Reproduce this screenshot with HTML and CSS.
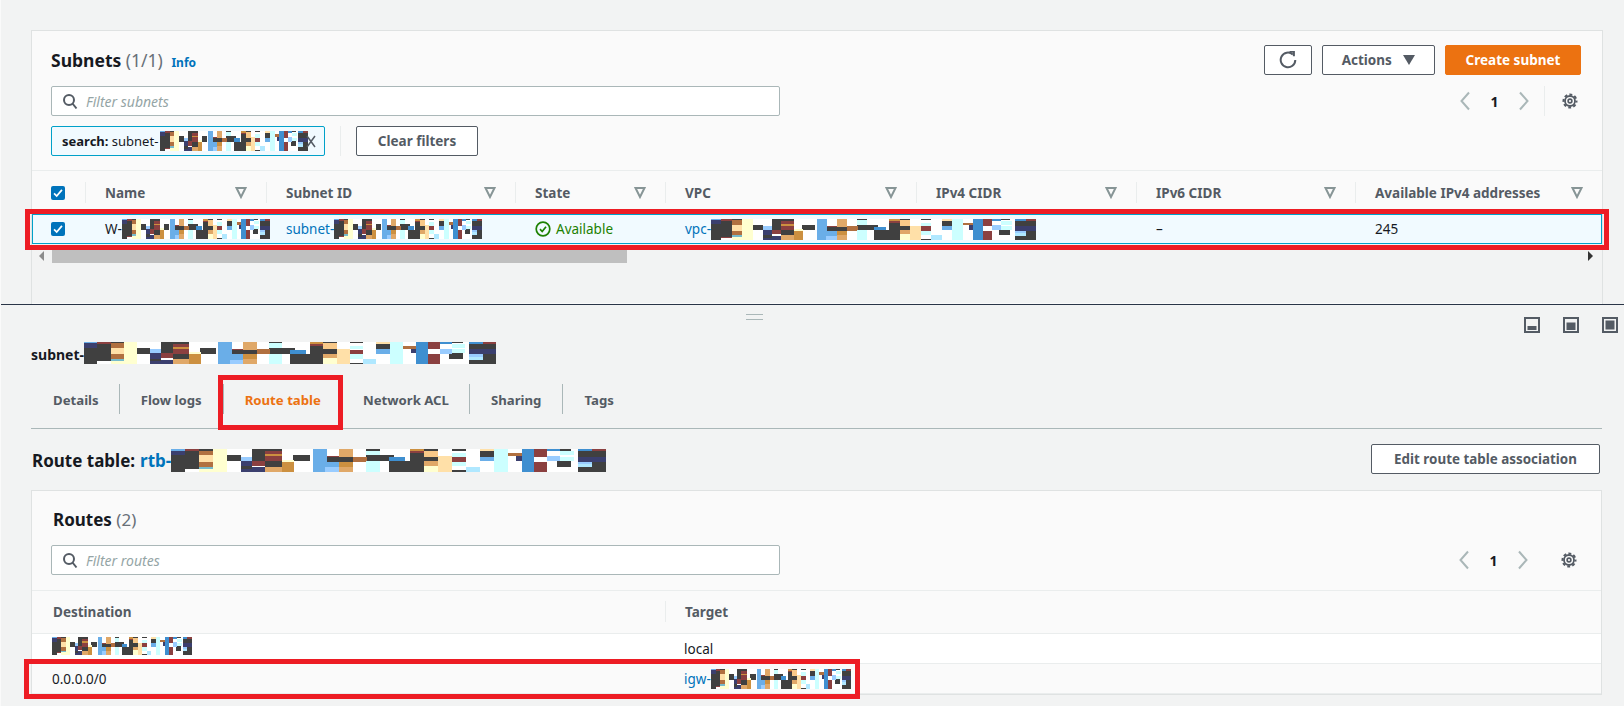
FILE: index.html
```html
<!DOCTYPE html>
<html lang="en">
<head>
    <meta charset="UTF-8">
    <title>Subnets</title>
    <link rel="stylesheet" href="styles.css">
</head>
<body>

<svg class="defs" width="0" height="0">
    <defs>
        <!-- the blurred-out id, 31 blocks wide and 6 high -->
        <g id="mosaic">
            <path fill="#404040" d="M0 1.5h1v4.5h-1zM1 .5h1v4.6h-1zM2 0h1v.4h-1zM4 1.6h1v1.6h-1zM5 4.5h.8v.8h-.8zM5.8 0h.9v3h-.9zM6.7 0h1.2v.5h-1.2zM6.7 3.2h1.2v1.5h-1.2zM8.7 1.6h1.2v1.6h-1.2zM11 2.2h2v1.2h-2zM13.9 0h1v.4h-1zM13.9 1.6h2v1.6h-2zM15.5 3.2h2.5v2.8h-2.5zM17 1h1v2.2h-1zM18 0h1v.4h-1zM18 2h1v1.2h-1zM20 0h1v.4h-1zM20 5.6h1v.4h-1zM22 .5h1v1.5h-1zM27.5 0h1v.4h-1zM27.5 3h1v1.6h-1zM29 .6h2v1.4h-2zM29 4.8h2v1.2h-2zM30 3.4h1v2h-1z"/>
            <path fill="#8b4040" d="M1 0h1v.5h-1zM1 5.1h1v.2h-1zM5.8 3h.9v1.4h-.9zM6.7 .5h1.2v.9h-1.2zM6.7 1.9h1.2v1.3h-1.2zM20 2.1h1v1.2h-1zM25.8 0h1v2h-1zM25.8 3.4h1v2.6h-1zM17 .5h1v.5h-1zM30 0h1v.6h-1zM11 1.9h1v.3h-1z"/>
            <path fill="#3b3f6e" d="M0 .4h1v1.1h-1zM5 3h.8v1.5h-.8zM5 5.3h.8v.7h-.8zM5.8 4.8h.9v1.2h-.9zM24.6 1.6h1v1.4h-1zM29 2h2v1.4h-2z"/>
            <path fill="#6aaee8" d="M0 0h1v.4h-1zM10.1 0h1v6h-1zM11 3.4h1v1.4h-1zM22 2h1v1.2h-1z"/>
            <path fill="#3f8fd0" d="M15.5 2.2h1.2v1h-1.2zM25 0h.9v6h-.9zM26.8 0h.9v.5h-.9zM29 0h1v.6h-1z"/>
            <path fill="#99ccff" d="M5 2h.8v1h-.8zM11 4.8h1v1.2h-1zM26.8 1.8h.9v1.4h-.9zM29 3.4h1v1.4h-1z"/>
            <path fill="#b07040" d="M2 .4h1v1.2h-1zM2 3.3h1v1.3h-1zM13 2h1v1.4h-1zM24 1h1v.8h-1z"/>
            <path fill="#cc9040" d="M7.9 3.4h.9v2.6h-.9zM12 3.4h1v1.2h-1zM6.7 1.4h1.2v.5h-1.2zM17 0h1v.5h-1z"/>
            <path fill="#e0a868" d="M6.7 4.7h1.2v1.3h-1.2zM12 0h1v2.2h-1zM12 4.6h1v1.4h-1zM18 3.2h1v1.2h-1z"/>
            <path fill="#f8c888" d="M18 .4h1v1.6h-1z"/>
            <path fill="#ffe0a8" d="M2 1.6h1v1.7h-1zM19 1.9h1v4.1h-1zM22 0h1v.5h-1z"/>
            <path fill="#ffffd0" d="M3 0h1v6h-1zM2 5.1h1v.9h-1zM7.9 2.8h.9v.6h-.9zM18 4.4h1v1.6h-1z"/>
            <path fill="#77bbcc" d="M2 4.6h1v.5h-1z"/>
            <path fill="#ccffff" d="M13.9 .4h1v1.2h-1zM13.9 3.2h1v2.8h-1zM20 1h1v1h-1zM20 3.3h1v1.2h-1zM23 0h1v6h-1zM27.7 .6h1v1h-1zM27.7 2h1v1h-1z"/>
            <path fill="#b0e8ff" d="M21 4.6h1v1.4h-1zM29 4h1v.8h-1z"/>
        </g>
        <g id="caret"><path d="M1.5 2h9L6 11z" fill="none" stroke="#879596" stroke-width="2"/></g>
        <g id="search"><circle cx="7" cy="7" r="5" fill="none" stroke="#545b64" stroke-width="2"/><path d="M10.5 10.5l4 5" stroke="#545b64" stroke-width="2" fill="none"/></g>
        <g id="gear">
            <circle cx="8" cy="8" r="1.9" fill="none" stroke="#545b64" stroke-width="1.600"/>
            <circle cx="8" cy="8" r="5" fill="none" stroke="#545b64" stroke-width="1.800"/>
            <circle cx="8" cy="8" r="6.500" fill="none" stroke="#545b64" stroke-width="2" stroke-dasharray="2.900 2.205" stroke-dashoffset="1.400"/>
        </g>
    </defs>
</svg>

<div class="page">

    <div class="panel subnets">
        <div class="panel-top">
            <div class="panel-head">
                <h2>Subnets <span class="count">(1/1)</span> <a class="info">Info</a></h2>
                <div class="actions">
                    <button class="btn btn-icon">
                        <svg width="18" height="18" viewBox="0 0 18 18"><path d="M13.800 3.400A7.300 7.300 0 1 0 16.300 9" fill="none" stroke="#545b64" stroke-width="2"/><path d="M10.500 .8h4.400v4.400" fill="none" stroke="#545b64" stroke-width="2"/></svg>
                    </button>
                    <button class="btn btn-actions">Actions <span class="tri"></span></button>
                    <button class="btn btn-primary">Create subnet</button>
                </div>
            </div>
            <div class="filter-row">
                <div class="filter">
                    <svg width="16" height="17" viewBox="0 0 16 17"><use href="#search"/></svg>
                    <span>Filter subnets</span>
                </div>
                <div class="pager">
                    <svg width="12" height="20" viewBox="0 0 12 20"><path d="M10 1.500L2.500 10l7.500 8.500" fill="none" stroke="#aab7b8" stroke-width="2"/></svg>
                    <span class="page-no">1</span>
                    <svg width="12" height="20" viewBox="0 0 12 20"><path d="M2 1.500L9.500 10 2 18.500" fill="none" stroke="#aab7b8" stroke-width="2"/></svg>
                    <div class="pager-gear"><svg width="16" height="16" viewBox="0 0 16 16"><use href="#gear"/></svg></div>
                </div>
            </div>
            <div class="chip-row">
                <div class="chip">
                    <b>search:</b>&nbsp;subnet-<svg class="mosaic chip-mosaic" viewBox="0 0 31 6" preserveAspectRatio="none"><use href="#mosaic"/></svg>
                    <svg class="chip-x" width="10" height="13" viewBox="0 0 10 13"><path d="M1 1l8 11M9 1L1 12" fill="none" stroke="#545b64" stroke-width="1.500"/></svg>
                </div>
                <button class="btn btn-clear">Clear filters</button>
            </div>
        </div>

        <div class="grid-head subnet-cols">
            <div class="cell-check"><span class="checkbox"><svg width="16" height="16" viewBox="0 0 16 16"><path d="M3.500 8.500l3 3 6-7" fill="none" stroke="#fff" stroke-width="2"/></svg></span></div>
            <div class="th"><span>Name</span><svg width="12" height="13" viewBox="0 0 12 13"><use href="#caret"/></svg></div>
            <div class="th"><span>Subnet ID</span><svg width="12" height="13" viewBox="0 0 12 13"><use href="#caret"/></svg></div>
            <div class="th"><span>State</span><svg width="12" height="13" viewBox="0 0 12 13"><use href="#caret"/></svg></div>
            <div class="th"><span>VPC</span><svg width="12" height="13" viewBox="0 0 12 13"><use href="#caret"/></svg></div>
            <div class="th"><span>IPv4 CIDR</span><svg width="12" height="13" viewBox="0 0 12 13"><use href="#caret"/></svg></div>
            <div class="th"><span>IPv6 CIDR</span><svg width="12" height="13" viewBox="0 0 12 13"><use href="#caret"/></svg></div>
            <div class="th"><span>Available IPv4 addresses</span><svg width="12" height="13" viewBox="0 0 12 13"><use href="#caret"/></svg></div>
        </div>
        <div class="grid-row selected subnet-cols">
            <div class="cell-check"><span class="checkbox"><svg width="16" height="16" viewBox="0 0 16 16"><path d="M3.500 8.500l3 3 6-7" fill="none" stroke="#fff" stroke-width="2"/></svg></span></div>
            <div class="td">W-<svg class="mosaic short" viewBox="0 0 31 6" preserveAspectRatio="none"><use href="#mosaic"/></svg></div>
            <div class="td"><a>subnet-</a><svg class="mosaic short" viewBox="0 0 31 6" preserveAspectRatio="none"><use href="#mosaic"/></svg></div>
            <div class="td status">
                <svg width="16" height="16" viewBox="0 0 16 16"><circle cx="8" cy="8" r="6.800" fill="none" stroke="#1d8102" stroke-width="1.700"/><path d="M5 8.200l2.200 2.300L11 5.800" fill="none" stroke="#1d8102" stroke-width="1.700"/></svg>
                <span>Available</span>
            </div>
            <div class="td"><a>vpc-</a><svg class="mosaic wide" viewBox="0 0 31 6" preserveAspectRatio="none"><use href="#mosaic"/></svg></div>
            <div class="td"></div>
            <div class="td">–</div>
            <div class="td">245</div>
        </div>
        <div class="scroll-area">
            <span class="arrow-left"></span>
            <div class="thumb"></div>
            <span class="arrow-right"></span>
        </div>
    </div>

    <div class="split">
        <div class="handle"></div>
        <div class="split-icons">
            <svg width="16" height="16" viewBox="0 0 16 16"><rect x="1" y="1" width="14" height="14" fill="none" stroke="#545b64" stroke-width="2"/><rect x="3.500" y="9" width="9" height="4" fill="#545b64"/></svg>
            <svg width="16" height="16" viewBox="0 0 16 16"><rect x="1" y="1" width="14" height="14" fill="none" stroke="#545b64" stroke-width="2"/><rect x="3.500" y="5.500" width="9" height="7.500" fill="#545b64"/></svg>
            <svg width="16" height="16" viewBox="0 0 16 16"><rect x="1" y="1" width="14" height="14" fill="none" stroke="#545b64" stroke-width="2"/><rect x="3.500" y="3.500" width="9" height="9" fill="#545b64"/></svg>
        </div>
    </div>

    <div class="detail">
        <div class="detail-title"><b>subnet-</b><svg class="mosaic title-mosaic" viewBox="0 0 31 6" preserveAspectRatio="none"><use href="#mosaic"/></svg></div>

        <div class="tabs">
            <div class="tab">Details</div>
            <div class="tab">Flow logs</div>
            <div class="tab active">Route table</div>
            <div class="tab no-line">Network ACL</div>
            <div class="tab">Sharing</div>
            <div class="tab">Tags</div>
        </div>

        <div class="route-head">
            <h2>Route table: <a>rtb-</a><svg class="mosaic rtb-mosaic" viewBox="0 0 31 6" preserveAspectRatio="none"><use href="#mosaic"/></svg></h2>
            <button class="btn btn-edit">Edit route table association</button>
        </div>

        <div class="panel routes">
            <div class="panel-top">
                <h2 class="routes-title">Routes <span class="count">(2)</span></h2>
                <div class="filter-row">
                    <div class="filter">
                        <svg width="16" height="17" viewBox="0 0 16 17"><use href="#search"/></svg>
                        <span>Filter routes</span>
                    </div>
                    <div class="pager">
                        <svg width="12" height="20" viewBox="0 0 12 20"><path d="M10 1.500L2.500 10l7.500 8.500" fill="none" stroke="#aab7b8" stroke-width="2"/></svg>
                        <span class="page-no">1</span>
                        <svg width="12" height="20" viewBox="0 0 12 20"><path d="M2 1.500L9.500 10 2 18.500" fill="none" stroke="#aab7b8" stroke-width="2"/></svg>
                        <div class="pager-gear no-sep"><svg width="16" height="16" viewBox="0 0 16 16"><use href="#gear"/></svg></div>
                    </div>
                </div>
            </div>
            <div class="route-table-head route-cols">
                <div class="rth">Destination</div>
                <div class="rth">Target</div>
            </div>
            <div class="route-row first route-cols">
                <div class="rtd"><svg class="mosaic route-mosaic" viewBox="0 0 31 6" preserveAspectRatio="none"><use href="#mosaic"/></svg></div>
                <div class="rtd">local</div>
            </div>
            <div class="route-row route-cols">
                <div class="rtd">0.0.0.0/0</div>
                <div class="rtd"><a>igw-</a><svg class="mosaic igw-mosaic" viewBox="0 0 31 6" preserveAspectRatio="none"><use href="#mosaic"/></svg></div>
            </div>
        </div>
    </div>

    <!-- red boxes drawn over the screenshot -->
    <div class="mark mark-subnet"></div>
    <div class="mark mark-tab"></div>
    <div class="mark mark-route"></div>
</div>

</body>
</html>
```

FILE: styles.css
```css
* { box-sizing: border-box; }
body { margin: 0; font-family: "Noto Sans", sans-serif; font-size: 14px; color: #16191f; background: #f2f3f3; }
a { color: #0073bb; }
h2 { margin: 0; font-size: 17.5px; font-weight: 700; line-height: 30px; }
button { font-family: inherit; }
.defs { position: absolute; }

.page { position: relative; width: 1624px; height: 706px; overflow: hidden; padding-top: 30px; border-left: 1px solid #fafafa; }

.panel { background: #fafafa; border: 1px solid #dfe2e2; border-bottom: 0; }
.subnets { margin: 0 21px 0 30px; height: 274px; overflow: hidden; }
.panel-top { padding: 14px 21px 14px 19px; border-bottom: 1px solid #eaeded; }
.panel-head { display: flex; justify-content: space-between; height: 30px; }
.count { font-weight: 400; color: #687078; }
.info { font-size: 12px; font-weight: 700; margin-left: 4px; }

.actions { display: flex; gap: 10px; }
.btn { height: 30px; background: #fff; border: 1px solid #545b64; border-radius: 2px; color: #545b64; font-size: 13.5px; font-weight: 700; padding: 0; }
.btn-icon { width: 48px; display: flex; align-items: center; justify-content: center; }
.btn-actions { width: 113px; }
.tri { display: inline-block; margin-left: 8px; border: 6px solid transparent; border-top: 10px solid #545b64; border-bottom: 0; }
.btn-primary { width: 136px; background: #ec7211; border-color: #ec7211; color: #fff; }

.filter-row { display: flex; justify-content: space-between; margin-top: 11px; }
.filter { width: 729px; height: 30px; background: #fff; border: 1px solid #aab7b8; border-radius: 2px; display: flex; align-items: center; gap: 8px; padding-left: 10px; color: #95a5a6; font-style: italic; font-size: 14px; }
.pager { display: flex; align-items: center; height: 30px; color: #16191f; margin-right: 3px; }
.page-no { width: 47px; text-align: center; font-weight: 700; color: #16191f; }
.pager-gear { margin-left: 14px; padding-left: 17px; height: 30px; display: flex; align-items: center; border-left: 1px solid #eaeded; }

.chip-row { display: flex; margin-top: 10px; }
.chip { width: 274px; height: 30px; background: #f1faff; border: 1px solid #00a1c9; border-radius: 2px; display: flex; align-items: center; padding-left: 10px; font-size: 13px; color: #16191f; position: relative; }
.chip b { font-weight: 700; }
.chip-x { position: absolute; right: 8px; top: 8px; }
.btn-clear { width: 122px; margin-left: 31px; position: relative; }
.btn-clear::before { content: ""; position: absolute; left: -17px; top: -1px; height: 30px; border-left: 1px solid #eaeded; }

.mosaic { display: block; background: #fff; flex: none; shape-rendering: crispEdges; }
.chip-mosaic { width: 148px; height: 20px; margin-left: 2px; }
.short { width: 148px; height: 20px; margin-top: -1px; }
.wide { width: 325px; height: 21px; }
.title-mosaic { width: 412px; height: 22px; }
.rtb-mosaic { width: 435px; height: 23px; margin-top: -2px; }
.route-mosaic { width: 140px; height: 18px; margin-top: -6px; }
.igw-mosaic { width: 140px; height: 20px; }

.subnet-cols { display: grid; grid-template-columns: 53px 181px 249px 150px 251px 220px 219px 1fr; }
.grid-head { height: 43px; padding-top: 11px; }
.cell-check { padding-left: 19px; display: flex; align-items: center; }
.grid-head .cell-check { height: 21px; }
.checkbox { width: 14px; height: 14px; background: #0073bb; border-radius: 2px; display: flex; align-items: center; justify-content: center; }
.checkbox svg { flex: none; width: 14px; height: 14px; }
.th { height: 21px; display: flex; align-items: center; justify-content: space-between; padding: 0 19px 0 19px; border-left: 1px solid #eaeded; font-weight: 700; color: #545b64; font-size: 13.5px; }

.selected { height: 30px; background: #f1faff; border: 1px solid #00a1c9; }
.selected .cell-check { padding-left: 18px; }
.td { display: flex; align-items: center; padding-left: 18px; font-size: 13.5px; color: #16191f; margin-left: 1px; }
.td a { color: #0073bb; }
.status { color: #1d8102; gap: 5px; }

.scroll-area { position: relative; height: 59px; background: #f2f3f3; }
.thumb { position: absolute; left: 20px; top: 5px; width: 575px; height: 14px; background: #bfbfbf; }
.arrow-left { position: absolute; left: 7px; top: 7px; border: 5px solid transparent; border-right: 5px solid #8c8c8c; border-left: 0; }
.arrow-right { position: absolute; right: 9px; top: 7px; border: 5px solid transparent; border-left: 5px solid #333; border-right: 0; }

.split { height: 31px; border-top: 1px solid #2a3547; display: flex; align-items: center; padding-left: 745px; }
.handle { width: 17px; height: 6px; border-top: 1px solid #aab7b8; border-bottom: 1px solid #aab7b8; margin-top: -7px; }
.split-icons { margin-left: auto; margin-right: 6px; display: flex; gap: 23px; margin-top: 10px; }

.detail { padding: 7px 22px 0 30px; }
.detail-title { height: 22px; display: flex; align-items: center; font-size: 14px; }
.detail-title b { font-weight: 700; margin-top: 3px; }

.tabs { display: flex; margin-top: 5px; padding: 15px 0 14px; border-bottom: 1px solid #aab7b8; height: 60px; }
.tab { height: 30px; line-height: 32px; padding: 0 21px; font-weight: 700; font-size: 13.2px; color: #545b64; border-left: 1px solid #aab7b8; }
.tab:first-child { border-left: 0; padding: 0 20px 0 22px; }
.tab.active { color: #ec7211; }
.tab.no-line { border-left: 0; padding-right: 20px; }

.route-head { display: flex; justify-content: space-between; margin-top: 15px; }
.route-head h2 { font-size: 17px; display: flex; align-items: center; padding-left: 1px; margin-top: 4px; line-height: 22px; }
.route-head h2 a { margin-left: 5px; }
.btn-edit { width: 229px; margin-right: 2px; font-size: 13.4px; }

.routes { margin-top: 16px; height: 205px; border-bottom: 1px solid #dfe2e2; }
.routes .panel-top { padding: 14px 21px 15px 19px; }
.routes-title { font-size: 17px; line-height: 30px; padding-left: 2px; }
.routes .filter-row { margin-top: 10px; }
.no-sep { border-left: 0; }
.routes .pager-gear { margin-left: 15px; }

.route-cols { display: grid; grid-template-columns: 633px 1fr; }
.route-table-head { height: 43px; padding-top: 10px; border-bottom: 1px solid #eaeded; }
.rth { height: 21px; padding-left: 21px; font-weight: 700; color: #545b64; font-size: 13.5px; display: flex; align-items: center; }
.rth + .rth { border-left: 1px solid #eaeded; padding-left: 19px; }
.route-row { height: 30px; border-bottom: 1px solid #eaeded; }
.route-row.first { background: #fff; }
.rtd { display: flex; align-items: center; padding-left: 20px; font-size: 13.5px; }
.rtd + .rtd { padding-left: 19px; }

.mark { position: absolute; border: 5px solid #ed1c24; pointer-events: none; }
.mark-subnet { left: 24px; top: 209px; width: 1584px; height: 41px; }
.mark-tab { left: 217px; top: 375px; width: 125px; height: 55px; }
.mark-route { left: 23px; top: 659px; width: 836px; height: 40px; }
```
